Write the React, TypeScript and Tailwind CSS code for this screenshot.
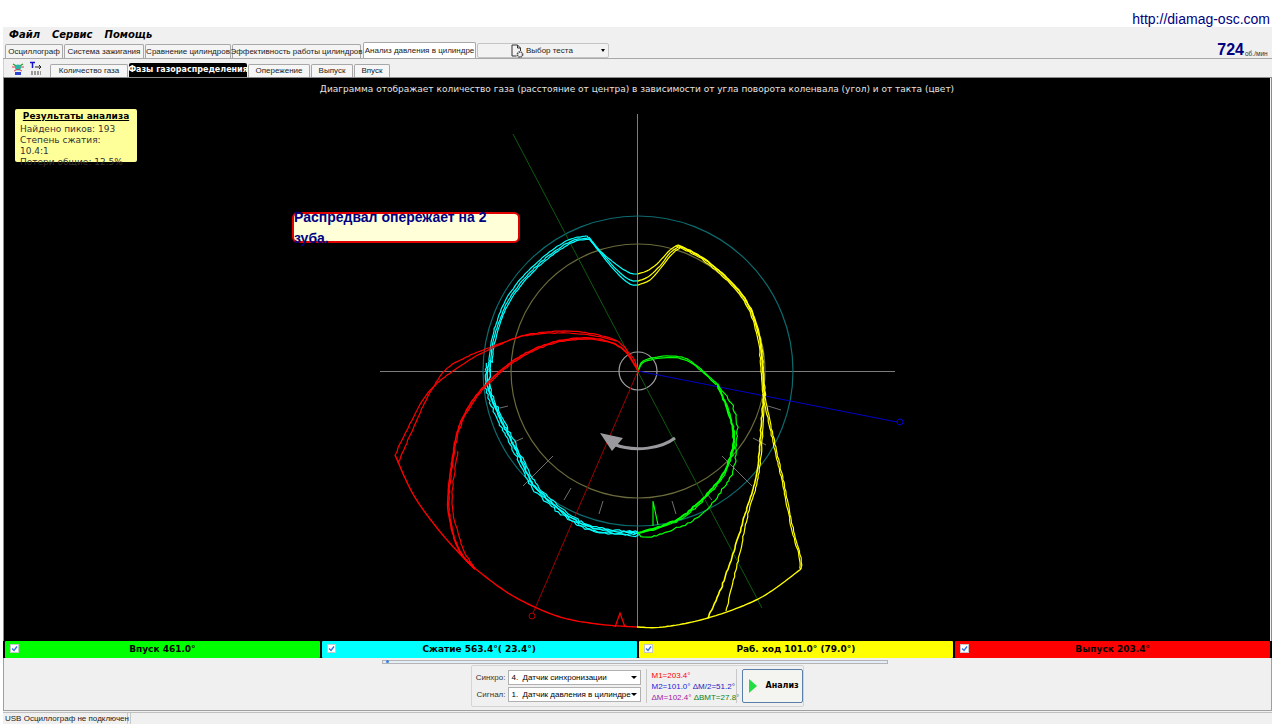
type Pt = [number, number];

const mainTabs = [
  { label: 'Осциллограф', w: 'w-[58px]' },
  { label: 'Система зажигания', w: 'w-[80px]' },
  { label: 'Сравнение цилиндров', w: 'w-[86px]' },
  { label: 'Эффективность работы цилиндров', w: 'w-[129px]' },
];

const subTabs = [
  { label: 'Количество газа', w: 'w-[78px]', active: false },
  { label: 'Фазы газораспределения', w: 'w-[118px]', active: true },
  { label: 'Опережение', w: 'w-[62px]', active: false },
  { label: 'Выпуск', w: 'w-[42px]', active: false },
  { label: 'Впуск', w: 'w-[36px]', active: false },
];

const strokes = [
  { label: 'Впуск 461.0°', bg: 'bg-[#00ff00]' },
  { label: 'Сжатие 563.4°( 23.4°)', bg: 'bg-[#00ffff]' },
  { label: 'Раб. ход 101.0° (79.0°)', bg: 'bg-[#ffff00]' },
  { label: 'Выпуск 203.4°', bg: 'bg-[#ff0000]' },
];

const ticks = [
  [500, 407, 508, 405], [510, 443, 523, 437], [523, 485, 553, 455], [564, 499, 571, 487], [599, 513, 603, 500],
  [672, 500, 676, 513], [707, 493, 712, 499], [722, 455, 752, 485], [753, 437, 766, 444], [768, 405, 781, 409],
];

// catmull-rom through the points, with a bit of noise so it looks like measured signal
function trace(pts: Pt[], jitter: number, seed: number, dx = 0, dy = 0) {
  let s = seed;
  const rnd = () => {
    s = (s * 9301 + 49297) % 233280;
    return s / 233280 - 0.5;
  };
  const out: string[] = [];
  for (let i = 0; i < pts.length - 1; i++) {
    const p0 = pts[Math.max(i - 1, 0)];
    const p1 = pts[i];
    const p2 = pts[i + 1];
    const p3 = pts[Math.min(i + 2, pts.length - 1)];
    const len = Math.hypot(p2[0] - p1[0], p2[1] - p1[1]);
    const steps = Math.max(2, Math.round(len / 3));
    for (let k = 0; k < steps; k++) {
      const t = k / steps;
      const x = 0.5 * (2 * p1[0] + (p2[0] - p0[0]) * t + (2 * p0[0] - 5 * p1[0] + 4 * p2[0] - p3[0]) * t * t + (3 * p1[0] - p0[0] - 3 * p2[0] + p3[0]) * t * t * t);
      const y = 0.5 * (2 * p1[1] + (p2[1] - p0[1]) * t + (2 * p0[1] - 5 * p1[1] + 4 * p2[1] - p3[1]) * t * t + (3 * p1[1] - p0[1] - 3 * p2[1] + p3[1]) * t * t * t);
      out.push(`${(x + dx + rnd() * jitter).toFixed(1)} ${(y + dy + rnd() * jitter).toFixed(1)}`);
    }
  }
  const last = pts[pts.length - 1];
  out.push(`${last[0]} ${last[1]}`);
  return 'M' + out.join('L');
}

const cyanUpper: Pt[] = [[587, 235], [566, 240], [533, 265], [507, 297], [493, 333], [489, 360]];
const cyanLower: Pt[] = [[489, 360], [488, 387], [500, 417], [520, 457], [533, 483], [553, 503], [573, 518], [597, 528], [637, 532]];
const yellowArc: Pt[] = [[678, 244], [703, 257], [733, 283], [750, 307], [760, 340], [763, 377], [765, 395]];
const greenRise: Pt[] = [[638, 370], [643, 360], [657, 356], [670, 355], [687, 358], [703, 370], [717, 383]];
const greenFall: Pt[] = [[717, 383], [727, 407], [733, 430], [732, 450], [723, 473], [707, 493], [687, 512], [670, 522], [653, 528], [637, 532]];
const greenWide: Pt[] = [[717, 383], [730, 400], [737, 420], [736, 450], [730, 477], [703, 512], [677, 527], [647, 537], [637, 532]];
const redA: Pt[] = [[638, 370], [633, 357], [617, 340], [593, 333], [567, 330], [537, 332], [513, 338], [480, 353], [450, 372], [427, 393], [413, 417], [403, 437], [395, 454]];
const redA2: Pt[] = [[617, 340], [590, 334], [560, 332], [530, 334], [507, 340], [453, 363], [430, 392], [412, 430], [398, 462]];
const redB: Pt[] = [[638, 370], [625, 350], [607, 340], [580, 337], [547, 343], [513, 360], [480, 390], [460, 423], [452, 460], [448, 507], [458, 547], [475, 568]];
const redOuter: Pt[] = [[395, 454], [413, 493], [437, 527], [460, 553], [477, 569], [513, 595], [557, 615], [597, 623], [637, 626]];
const yellowRight: Pt[] = [[764, 393], [775, 443], [785, 487], [793, 527], [801, 557], [801, 568]];
const yellowLeftA: Pt[] = [[764, 393], [762, 413], [757, 470], [747, 507], [733, 553], [720, 590], [708, 617]];
const yellowLeftB: Pt[] = [[764, 393], [763, 430], [758, 477], [748, 513], [738, 560], [726, 610]];
const yellowOuter: Pt[] = [[801, 568], [760, 597], [708, 617], [663, 626], [637, 626]];

function Diagram() {
  return (
    <svg className="absolute inset-0" width="1266" height="564" viewBox="4 77 1266 564" fill="none">
      <line x1="380" y1="370.5" x2="895" y2="370.5" stroke="#7d7d7d" />
      <line x1="637.5" y1="113" x2="637.5" y2="627" stroke="#7d7d7d" />
      <circle cx="638" cy="370" r="155" stroke="#0b6b6e" strokeWidth="1.2" />
      <circle cx="638" cy="370" r="127" stroke="#6a6a3c" strokeWidth="1.2" />
      <circle cx="638" cy="370" r="19" stroke="#a0a0a0" strokeWidth="1.2" />
      {ticks.map((t, i) => (
        <line key={i} x1={t[0]} y1={t[1]} x2={t[2]} y2={t[3]} stroke="#707070" />
      ))}
      <line x1="513" y1="133" x2="762" y2="607" stroke="#0f5a0f" />
      <line x1="638" y1="370" x2="533" y2="612" stroke="#a00000" />
      <circle cx="532" cy="615" r="3" stroke="#b00000" />
      <line x1="638" y1="370" x2="897" y2="421" stroke="#0000c8" />
      <circle cx="900" cy="421" r="3" stroke="#0000d0" />

      {/* стрелка вращения */}
      <path d="M675 437C662 447 636 452 613 443" stroke="#9a9a9e" strokeWidth="3" />
      <polygon points="600,432 623,437 612,450" fill="#9a9a9e" />

      {/* Впуск */}
      <g stroke="#00ff00" strokeWidth="1.2">
        <path d={trace(greenRise, 0.6, 11)} />
        <path d={trace(greenRise, 0.6, 12, 0, 1.5)} />
        <path d={trace(greenFall, 1.2, 13)} strokeWidth="2" />
        <path d={trace(greenFall, 1.6, 14, 1, 1)} />
        <path d={trace(greenWide, 1.8, 15)} />
        <path d="M653 500L653 525M653 500L658 524" />
      </g>

      {/* Сжатие */}
      <g stroke="#00ffff" strokeWidth="1.2">
        <path d={trace(cyanUpper, 0.7, 21)} />
        <path d={trace(cyanUpper, 0.7, 22, 1.5, 2)} />
        <path d={trace(cyanUpper, 0.7, 23, 3, 3)} />
        <path d={trace(cyanLower, 1.6, 24)} strokeWidth="1.6" />
        <path d={trace(cyanLower, 2, 25, 2, -1)} />
        <path d={trace(cyanLower, 2.2, 26, -2, 2)} />
        <path d={trace(cyanLower, 2, 27, 2, 3)} />
        <path d={trace([[587, 235], [598, 248], [617, 264], [630, 272], [638, 273]], 0.3, 28)} />
        <path d={trace([[589, 236], [600, 250], [617, 269], [630, 279], [638, 280]], 0.3, 29)} />
        <path d={trace([[590, 238], [601, 253], [617, 272], [630, 283], [638, 284]], 0.3, 30)} />
      </g>

      {/* Раб. ход */}
      <g stroke="#ffff00" strokeWidth="1.2">
        <path d={trace(yellowArc, 0.8, 31)} strokeWidth="1.6" />
        <path d={trace(yellowArc, 1, 32, -1.5, 1)} />
        <path d={trace(yellowArc, 1, 33, 1, 1)} />
        <path d={trace([[638, 273], [647, 270], [657, 263], [670, 249], [678, 244]], 0.3, 34)} />
        <path d={trace([[638, 280], [648, 276], [660, 265], [670, 252], [678, 246]], 0.3, 35)} />
        <path d={trace([[638, 284], [650, 279], [660, 268], [672, 253], [680, 247]], 0.3, 36)} />
        <path d={trace(yellowRight, 0.9, 37)} />
        <path d={trace(yellowRight, 0.9, 38, -1.5, 0)} />
        <path d={trace(yellowLeftA, 0.9, 39)} strokeWidth="1.6" />
        <path d={trace(yellowLeftB, 0.9, 40)} />
        <path d={trace(yellowOuter, 0, 41)} strokeWidth="1.4" />
      </g>

      {/* Выпуск */}
      <g stroke="#ff0000" strokeWidth="1.2">
        <path d={trace(redA, 0.7, 51)} />
        <path d={trace(redA2, 0.7, 52)} />
        <path d={trace(redB, 0.7, 53)} strokeWidth="1.6" />
        <path d={trace(redB, 1, 54, 1, 1)} />
        <path d={trace([[458, 450], [452, 500], [462, 545], [475, 568]], 1, 55)} />
        <path d={trace(redOuter, 0, 56)} strokeWidth="1.4" />
        <path d="M615 626L620 612L625 626" />
      </g>
    </svg>
  );
}

function Check() {
  return (
    <span className="flex h-[9px] w-[9px] shrink-0 items-center justify-center border border-[#c8c8c8] bg-white">
      <svg width="7" height="7" viewBox="0 0 7 7" fill="none">
        <path d="M1 3.5L3 5.5L6 1.5" stroke="#2f6fe0" strokeWidth="1.3" />
      </svg>
    </span>
  );
}

function Combo({ label, value }: { label: string; value: string }) {
  return (
    <div className="flex h-[15px] items-center">
      <span className="w-[35px] text-right text-[8px] text-[#333] pr-[2px]">{label}</span>
      <div className="flex h-[15px] w-[133px] items-center justify-between border border-[#b0b0b0] bg-white px-[3px] text-[8px] text-black">
        <span className="whitespace-pre">{value}</span>
        <span className="h-0 w-0 border-x-[3px] border-t-[3px] border-x-transparent border-t-black" />
      </div>
    </div>
  );
}

export default function App() {
  return (
    <div className="h-[725px] w-[1280px] overflow-hidden bg-white font-['Liberation_Sans',sans-serif]">
      <div className="flex h-[27px] items-end justify-end pr-[10px] text-[14px] leading-[16px] text-[#000080]">
        http://diamag-osc.com
      </div>

      <div className="ml-[3px] w-[1269px] bg-[#f0f0f0]">
        {/* меню */}
        <div className="flex h-[15px] items-center gap-[12px] pl-[6px] font-['DejaVu_Sans',sans-serif] text-[10px] font-bold italic text-black">
          <span>Файл</span>
          <span>Сервис</span>
          <span>Помощь</span>
        </div>

        {/* вкладки верхнего уровня */}
        <div className="flex h-[16px] items-end gap-[1px] pl-[2px] text-[8px] text-[#222]">
          {mainTabs.map((tab) => (
            <div key={tab.label} className={`flex h-[14px] items-center justify-center rounded-t-[2px] border border-b-0 border-[#a8a8a8] bg-[#f4f4f4] whitespace-nowrap ${tab.w}`}>
              {tab.label}
            </div>
          ))}
          <div className="ml-[1px] flex h-[16px] w-[113px] items-center justify-center rounded-t-[2px] border border-b-0 border-[#a8a8a8] bg-white whitespace-nowrap">
            Анализ давления в цилиндре
          </div>
          <div className="flex h-[15px] w-[132px] items-center rounded-[2px] border border-[#c4c4c4] bg-[#f2f2f2] pl-[32px] pr-[3px]">
            <svg width="14" height="14" viewBox="0 0 14 14" fill="none" className="shrink-0">
              <path d="M2 1H7.5L10.5 4V7M2 1V12H6.5M7.5 1V4H10.5" stroke="#333" />
              <circle cx="10" cy="10.5" r="2.6" stroke="#555" strokeWidth="1.6" strokeDasharray="1.5 0.6" />
            </svg>
            <span className="ml-[2px] flex-1">Выбор теста</span>
            <span className="h-0 w-0 border-x-[2px] border-t-[3px] border-x-transparent border-t-black" />
          </div>
          <div className="flex flex-1 items-end justify-end self-end text-[#000080]">
            <span className="text-[16px] leading-[17px] font-bold">724</span>
            <span className="ml-[1px] w-[27px] overflow-hidden text-[6.5px] leading-[9px] whitespace-nowrap text-[#333]">об./мин</span>
          </div>
        </div>

        {/* вложенные вкладки */}
        <div className="flex h-[19px] items-end border-t border-[#a8a8a8] text-[8px] text-[#222]">
          <div className="flex h-[18px] w-[42px] shrink-0 items-center gap-[5px] border-l border-[#d0d0d0] pl-[7px]">
            <svg width="14" height="15" viewBox="0 0 14 15" fill="none">
              <path d="M2 3L7 6L12 3" stroke="#2e9c2e" strokeWidth="1.4" />
              <path d="M1 6H5M9 6H13" stroke="#e23b3b" strokeWidth="1.2" />
              <circle cx="7" cy="6.5" r="3" fill="#22b8a8" />
              <path d="M3 10L7 8L11 10" stroke="#e23b3b" />
              <rect x="4" y="11" width="6" height="3" fill="#2b45d6" />
            </svg>
            <svg width="12" height="14" viewBox="0 0 12 14" fill="none">
              <path d="M0 1.5H5M2.5 1.5V7" stroke="#1515c8" strokeWidth="1.5" />
              <path d="M5 6H11M9 4L11 6L9 8" stroke="#222" />
              <path d="M1 11H11M1 13H11" stroke="#444" strokeDasharray="2 1" />
            </svg>
          </div>
          <div className="ml-[5px] flex items-end gap-[1px]">
            {subTabs.map((tab) =>
              tab.active ? (
                <div key={tab.label} className={`flex h-[14px] items-center justify-center rounded-t-[2px] bg-black font-['DejaVu_Sans',sans-serif] text-[8px] font-bold text-white whitespace-nowrap ${tab.w}`}>
                  {tab.label}
                </div>
              ) : (
                <div key={tab.label} className={`flex h-[13px] items-center justify-center rounded-t-[2px] border border-b-0 border-[#a8a8a8] bg-[#f6f6f6] whitespace-nowrap ${tab.w}`}>
                  {tab.label}
                </div>
              ),
            )}
          </div>
        </div>

        {/* диаграмма */}
        <div className="border-x border-[#8c8c8c] border-t border-t-[#8c8c8c] pr-[1px]">
          <div className="relative h-[563px] w-[1266px] bg-black font-['DejaVu_Sans',sans-serif]">
            <Diagram />
            <p className="absolute inset-x-0 top-[5px] text-center text-[9px] leading-[12px] text-[#e4e4e4]">
              Диаграмма отображает количество газа (расстояние от центра) в зависимости от угла поворота коленвала (угол) и от такта (цвет)
            </p>
            <div className="absolute left-[11px] top-[31px] h-[53px] w-[122px] rounded-[2px] bg-[#ffff99] px-[5px] pt-[2px] text-[9px] leading-[11px] text-[#333]">
              <div className="text-center font-bold text-black underline">Результаты анализа</div>
              <div className="mt-[2px]">Найдено пиков: 193</div>
              <div>Степень сжатия: 10.4:1</div>
              <div>Потери общие: 12.5%</div>
            </div>
            <div className="absolute left-[288px] top-[134px] flex h-[31px] w-[228px] items-center justify-center rounded-[6px] border-2 border-[#e00000] bg-[#ffffd8] font-['Liberation_Sans',sans-serif] text-[14px] font-bold text-[#000080]">
              Распредвал опережает на 2 зуба.
            </div>
          </div>
        </div>

        {/* такты */}
        <div className="flex h-[17px] gap-[2px] bg-black pl-[2px] pr-[2px] font-['DejaVu_Sans',sans-serif] text-[9px] font-bold text-black">
          {strokes.map((item) => (
            <div key={item.label} className={`relative flex flex-1 items-center justify-center rounded-[1px] ${item.bg}`}>
              <span className="absolute left-[5px] top-[3px]">
                <Check />
              </span>
              {item.label}
            </div>
          ))}
        </div>

        {/* нижняя панель */}
        <div className="flex h-[53px] flex-col items-center border-x border-b border-[#a0a0a0] pt-[2px]">
          <div className="relative -ml-[5px] h-[4px] w-[506px] border border-[#b4b4b4] bg-[#e4eef8]">
            <span className="absolute -top-[1px] left-[3px] h-[3px] w-[3px] rounded-full bg-[#3a7fe0]" />
          </div>
          <div className="mt-[1px] -ml-[1px] flex h-[42px] w-[333px] items-center rounded-[2px] border border-[#d4d4d4] pl-[1px]">
            <div className="flex flex-col gap-[2px]">
              <Combo label="Синхро:" value="4.  Датчик синхронизации" />
              <Combo label="Сигнал:" value="1.  Датчик давления в цилиндре" />
            </div>
            <div className="ml-[5px] h-[34px] w-px bg-[#c8c8c8]" />
            <div className="ml-[5px] w-[83px] text-[8px] leading-[11px] whitespace-nowrap">
              <div className="text-[#ff0000]">M1=203.4°</div>
              <div>
                <span className="text-[#2020e0]">M2=101.0°</span> <span className="text-[#2020c0]">ΔM/2=51.2°</span>
              </div>
              <div>
                <span className="text-[#a020a0]">ΔM=102.4°</span> <span className="text-[#108010]">ΔВМТ=27.8°</span>
              </div>
            </div>
            <div className="ml-[1px] h-[34px] w-px bg-[#c8c8c8]" />
            <div className="ml-[5px] flex h-[34px] w-[61px] items-center rounded-[2px] border border-[#5a7fa8] bg-[#f4f4f0] pl-[6px] font-['DejaVu_Sans',sans-serif] text-[8px] font-bold text-black">
              <svg width="8" height="14" viewBox="0 0 8 14" className="shrink-0">
                <polygon points="0,0 8,7 0,14" fill="#22dd44" />
              </svg>
              <span className="ml-[9px]">Анализ</span>
            </div>
          </div>
        </div>

        {/* статус */}
        <div className="mt-[1px] flex h-[12px] gap-[2px] border-t border-[#c0c0c0] text-[8px] leading-[11px] text-[#222]">
          <div className="w-[125px] border-r border-[#c8c8c8] pl-[2px] whitespace-nowrap">USB Осциллограф не подключен</div>
          <div className="flex-1 border-l border-[#c8c8c8]" />
        </div>
      </div>
    </div>
  );
}
